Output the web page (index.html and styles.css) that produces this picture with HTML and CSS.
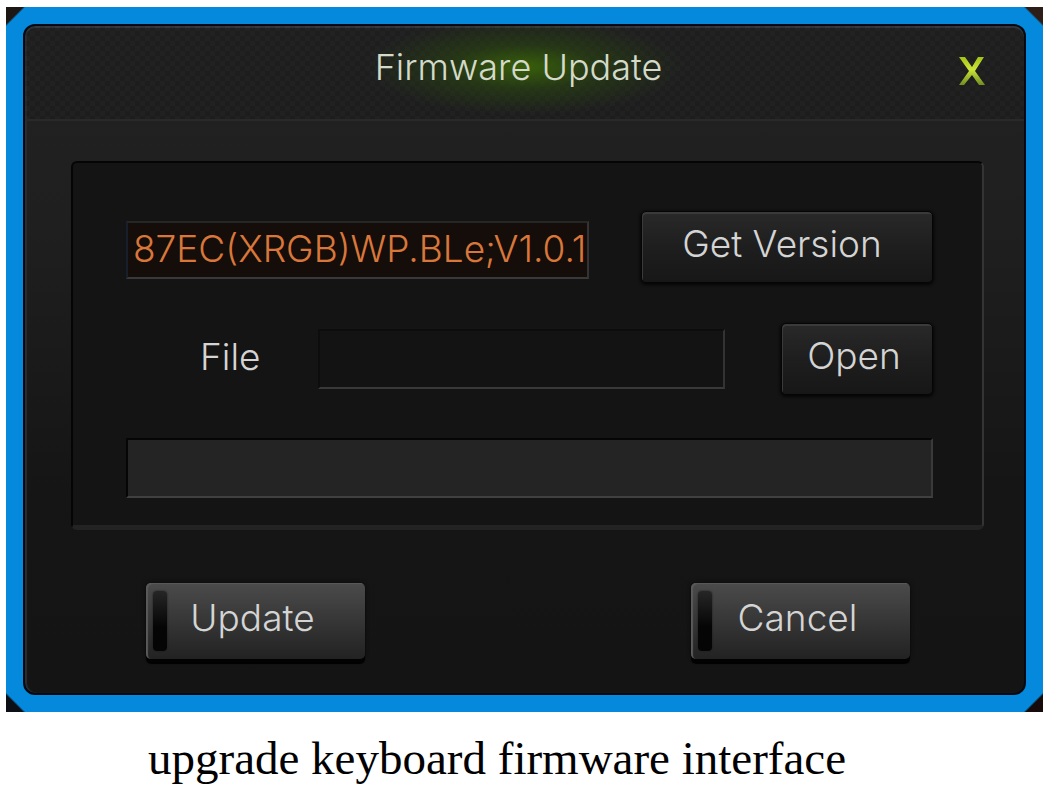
FILE: index.html
```
<!DOCTYPE html>
<html lang="en">
  <head>
    <meta charset="UTF-8" />
    <meta name="viewport" content="width=device-width, initial-scale=1.0" />
    <title>Firmware Update</title>
    <link rel="stylesheet" href="styles.css">
  </head>
  <body>
    <figure class="shot">
      <div class="frame">
        <form class="dialog">
          <header class="titlebar">
            <h1>Firmware Update</h1>
            <button type="button" class="close" aria-label="Close">
              <svg width="28" height="30" viewBox="0 0 28 30">
                <defs>
                  <linearGradient id="lime" x1="0" y1="0" x2="0" y2="1">
                    <stop offset="0" stop-color="#a3c216" />
                    <stop offset="0.45" stop-color="#cce53a" />
                    <stop offset="1" stop-color="#6f8c20" />
                  </linearGradient>
                </defs>
                <path d="M1 1h6l7 10 6-10h6l-9 14 10 14h-6l-7-10-8 10H1l10-14z" fill="url(#lime)" />
              </svg>
            </button>
          </header>

          <div class="panel">
            <div class="row">
              <input type="text" class="field version" aria-label="Version" value="87EC(XRGB)WP.BLe;V1.0.1" readonly />
              <button type="button" class="btn get">Get Version</button>
            </div>
            <div class="row file-row">
              <label for="file">File</label>
              <input type="text" class="field" id="file" />
              <button type="button" class="btn open">Open</button>
            </div>
            <progress class="bar" value="0" max="100" aria-label="Progress"></progress>
          </div>

          <footer class="actions">
            <button type="button" class="btn action">Update</button>
            <button type="button" class="btn action">Cancel</button>
          </footer>
        </form>
      </div>
      <figcaption>upgrade keyboard firmware interface</figcaption>
    </figure>
  </body>
</html>
```
FILE: styles.css
```
* {
  box-sizing: border-box;
}

body {
  margin: 0;
  background: #fff;
}

.shot {
  margin: 7px 7px 0 6px;
}

/* blue frame with cut corners over the dark backdrop */
.frame {
  padding: 17px;
  background:
    linear-gradient(135deg, #1c1715 12px, transparent 14px),
    linear-gradient(225deg, #2c1d18 12px, transparent 14px),
    linear-gradient(45deg, #0c1016 12px, transparent 14px),
    linear-gradient(315deg, #160a0a 12px, transparent 14px),
    #0489dd;
}

.dialog {
  border: 2px solid #030a14;
  border-radius: 12px;
  background: linear-gradient(#222223, #1f1f20 30%, #151515 70%, #141414);
  box-shadow: inset 0 2px 0 #35393d, inset 2px 0 1px #2c2d30;
  font-family: Inter, "Liberation Sans", sans-serif;
  font-size: 37px;
  font-weight: 300;
  line-height: 44px;
  color: #d4d4d4;
  overflow: hidden;
}

.titlebar {
  display: grid;
  grid-template-columns: 1fr auto 1fr;
  align-items: center;
  height: 95px;
  padding: 0 38px 8px 26px;
  border-bottom: 2px solid #29292a;
  background:
    radial-gradient(ellipse 160px 48px at 50% 44%, rgba(58, 102, 8, 0.9), rgba(44, 78, 12, 0.5) 45%, transparent),
    repeating-conic-gradient(rgba(0, 0, 0, 0.12) 0 25%, transparent 0 50%) 0 0 / 10px 10px;
}

h1 {
  grid-column: 2;
  margin: 0;
  padding-bottom: 4px;
  font-size: 36px;
  font-weight: inherit;
  color: #d3dac8;
}

.close {
  justify-self: end;
  padding: 4px 0 0;
  border: 0;
  background: none;
  cursor: pointer;
}

.close svg {
  display: block;
}

.panel {
  display: flex;
  flex-direction: column;
  gap: 40px;
  margin: 40px 40px 0 46px;
  padding: 48px 49px 27px 53px;
  border: 2px solid #050505;
  border-right-color: #343434;
  border-bottom: 5px solid #232323;
  border-radius: 6px;
  background: #141414;
}

.row {
  display: flex;
  align-items: center;
}

.field {
  flex: 1;
  min-width: 0;
  height: 60px;
  padding: 0 6px;
  border: 2px solid #0d0d0d;
  border-right-color: #333;
  border-bottom-color: #393939;
  background: #131313;
  font: inherit;
  color: inherit;
}

.version {
  height: 58px;
  margin-top: 6px;
  padding: 0 0 4px 5px;
  border-top-color: #262626;
  border-left-color: #17202a;
  background: #150d09;
  color: #d9773a;
}

.file-row {
  padding-left: 74px;
}

.file-row label {
  width: 118px;
  padding-bottom: 4px;
}

.btn {
  height: 72px;
  padding: 0 0 6px;
  border: 1px solid #050505;
  border-radius: 5px;
  background: linear-gradient(#292929, #1e1e1e 50%, #171717);
  box-shadow: inset 1px 2px 0 #3a3a3a, 0 1px 3px 1px #060606;
  font: inherit;
  color: inherit;
  cursor: pointer;
}

.get {
  width: 292px;
  margin-left: 52px;
  padding-right: 10px;
}

.open {
  width: 152px;
  margin-left: 56px;
  padding-right: 6px;
}

.bar {
  appearance: none;
  display: block;
  width: 100%;
  height: 60px;
  margin-top: 3px;
  border: 2px solid #060606;
  border-right-color: #3a3a3a;
  border-bottom-color: #404040;
  background: #242425;
}

.bar::-webkit-progress-bar {
  background: #242425;
}

.actions {
  display: flex;
  justify-content: space-between;
  padding: 53px 114px 34px 121px;
}

.action {
  position: relative;
  width: 219px;
  height: 76px;
  padding: 0 6px 6px 0;
  border: 0;
  background: linear-gradient(#4b4b4b, #383838 45%, #222);
  box-shadow: inset 2px 1px 1px #5a5a5a, 0 5px 1px #020202, 0 0 4px #0a0a0a;
}

/* unlit lamp on the left edge of the button */
.action::before {
  content: "";
  position: absolute;
  top: 8px;
  left: 7px;
  width: 14px;
  height: 60px;
  border-radius: 4px;
  background: linear-gradient(#262626, #050505 60%);
  box-shadow: 0 0 2px #1a1a1a;
}

figcaption {
  padding: 19px 0 0 142px;
  font-family: "Liberation Serif", serif;
  font-size: 47px;
  line-height: 54px;
  white-space: nowrap;
  color: #000;
}
```
